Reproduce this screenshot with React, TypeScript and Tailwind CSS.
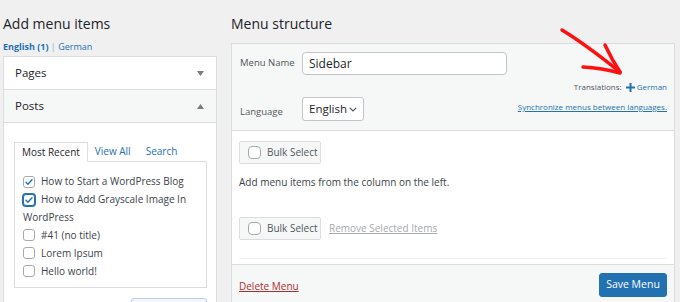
import React from 'react';

const font = { fontFamily: '"Open Sans", "Noto Sans", sans-serif' };

function Check({ checked, focused }: { checked?: boolean; focused?: boolean }) {
    return (
        <span
            className={
                'inline-flex items-center justify-center w-[12px] h-[12px] rounded-[3px] border bg-white align-[-2px] mr-[6px] ' +
                (focused ? 'border-[#2271b1] shadow-[0_0_0_1px_#2271b1]' : 'border-[#a7aaad]')
            }
        >
            {checked && (
                <svg width="10" height="10" viewBox="0 0 20 20">
                    <path d="M4 10.5l3.8 3.8L16 5.5" fill="none" stroke="#2271b1" strokeWidth="2.8" strokeLinecap="round" strokeLinejoin="round" />
                </svg>
            )}
        </span>
    );
}

function BulkSelect() {
    return (
        <div className="flex items-center w-[82px] h-[23px] bg-[#f6f7f7] border border-[#dcdcde] rounded-[2px] pl-[8px]">
            <span className="w-[13px] h-[13px] rounded-[4px] border border-[#a7aaad] bg-white mr-[6px]" />
            <span className="text-[10px] text-[#50575e]">Bulk Select</span>
        </div>
    );
}

export default function App() {
    const posts = [
        { label: 'How to Start a WordPress Blog', checked: true },
        { label: 'How to Add Grayscale Image In WordPress', checked: true, focused: true },
        { label: '#41 (no title)' },
        { label: 'Lorem Ipsum' },
        { label: 'Hello world!' },
    ];

    return (
        <div className="relative w-[680px] h-[302px] overflow-hidden bg-[#f0f0f1] text-[#1d2327]" style={font}>
            <div className="flex h-full">
                {/* Left column */}
                <div className="w-[214px] ml-[3px] flex flex-col">
                    <h2 className="pt-[14px] text-[14px] leading-[20px] font-normal">Add menu items</h2>
                    <div className="mt-[7px] text-[9px] leading-[12px]">
                        <span className="font-bold text-[#2271b1]">English (1)</span>
                        <span className="text-[#a7aaad]"> | </span>
                        <span className="text-[#2271b1]">German</span>
                    </div>
                    <div className="mt-[3px] flex-1 bg-white border border-[#dcdcde] border-b-0">
                        <div className="h-[33px] flex items-center justify-between pl-[11px] pr-[12px] border-b border-[#dcdcde] text-[11.5px]">
                            <span>Pages</span>
                            <svg width="7" height="5" viewBox="0 0 7 5"><path d="M0 0h7L3.5 5z" fill="#787c82" /></svg>
                        </div>
                        <div className="h-[33px] flex items-center justify-between pl-[11px] pr-[12px] bg-[#f6f7f7] border-b border-[#dcdcde] text-[11.5px]">
                            <span>Posts</span>
                            <svg width="7" height="5" viewBox="0 0 7 5"><path d="M0 5h7L3.5 0z" fill="#787c82" /></svg>
                        </div>
                        <div className="pl-[10px] pr-[9px] pt-[18px]">
                            <div className="flex items-end text-[10px] leading-[14px]">
                                <div className="relative z-10 -mb-px h-[20px] px-[7px] flex items-center bg-white border border-[#dcdcde] border-b-white">Most Recent</div>
                                <div className="ml-[7px] h-[20px] flex items-center text-[#2271b1]">View All</div>
                                <div className="ml-[15px] h-[20px] flex items-center text-[#2271b1]">Search</div>
                            </div>
                            <div className="h-[127px] border border-[#dcdcde] pl-[8px] pr-[8px] pt-[10px] text-[10px] leading-[18px] text-[#3c434a]">
                                {posts.map((p) => (
                                    <div key={p.label}>
                                        <Check checked={p.checked} focused={p.focused} />
                                        {p.label}
                                    </div>
                                ))}
                            </div>
                            <div className="flex justify-end mt-[10px]">
                                <div className="w-[76px] h-[24px] rounded-[3px] border border-[#b7cfe6] bg-[#f6f7f7]" />
                            </div>
                        </div>
                    </div>
                </div>

                {/* Right column */}
                <div className="ml-[14px] w-[444px] flex flex-col">
                    <h2 className="pt-[14px] text-[14px] leading-[20px] font-normal">Menu structure</h2>
                    <div className="mt-[9px] flex-1 bg-white border border-[#dcdcde] border-b-0 flex flex-col">
                        <div className="flex justify-between bg-[#f6f7f7] border-b border-[#dcdcde] pl-[8px] pr-[7px] pt-[8px] pb-[9px]">
                            <div>
                                <div className="flex items-center">
                                    <span className="w-[62px] text-[9.5px] text-[#50575e]">Menu Name</span>
                                    <div className="w-[205px] h-[23px] bg-white border border-[#c3c4c7] rounded-[4px] flex items-center pl-[6px] text-[12px]">Sidebar</div>
                                </div>
                                <div className="flex items-center mt-[22px]">
                                    <span className="w-[62px] text-[9.5px] text-[#50575e] mt-[6px]">Language</span>
                                    <div className="w-[62px] h-[24px] bg-white border border-[#c3c4c7] rounded-[3px] flex items-center justify-between pl-[6px] pr-[6px] text-[11.5px]">
                                        <span>English</span>
                                        <svg width="8" height="5" viewBox="0 0 8 5"><path d="M0.8 0.8L4 4l3.2-3.2" fill="none" stroke="#50575e" strokeWidth="1.2" /></svg>
                                    </div>
                                </div>
                            </div>
                            <div className="flex flex-col items-end text-[8px] leading-[12px]">
                                <div className="mt-[29px] flex items-center">
                                    <span className="text-[#50575e]">Translations:</span>
                                    <svg className="ml-[4px] mr-[2px]" width="9" height="9" viewBox="0 0 9 9"><path d="M4.5 0v9M0 4.5h9" stroke="#2271b1" strokeWidth="2" /></svg>
                                    <span className="text-[#2271b1]">German</span>
                                </div>
                                <div className="mt-[8px] text-[#2271b1] underline">Synchronize menus between languages.</div>
                            </div>
                        </div>

                        <div className="px-[7px] pt-[10px]">
                            <BulkSelect />
                            <div className="mt-[11px] text-[10px] leading-[14px] text-[#3c434a]">Add menu items from the column on the left.</div>
                            <div className="mt-[28px] flex items-center">
                                <BulkSelect />
                                <span className="ml-[8px] text-[10px] text-[#a7aaad] underline">Remove Selected Items</span>
                            </div>
                            <div className="mt-[18px] border-b border-[#f0f0f1]" />
                        </div>

                        <div className="mt-[5px] flex-1 bg-[#f6f7f7] border-t border-[#dcdcde] flex justify-between items-start px-[7px] pt-[8px]">
                            <span className="mt-[6px] text-[10px] text-[#b32d2e] underline">Delete Menu</span>
                            <div className="w-[68px] h-[24px] bg-[#2271b1] rounded-[3px] border border-[#2271b1] flex items-center justify-center text-white text-[10.5px]">Save Menu</div>
                        </div>
                    </div>
                </div>
            </div>

            {/* Annotation arrow */}
            <svg className="absolute left-0 top-0 pointer-events-none" width="680" height="302">
                <g fill="none" stroke="#ff1010" strokeWidth="3.5" strokeLinecap="round" strokeLinejoin="round">
                    <path d="M562 30 Q585 44 620 72" />
                    <path d="M583 67 Q602 68 620 73" />
                    <path d="M605 45 Q612 60 620 72" />
                </g>
            </svg>
        </div>
    );
}
